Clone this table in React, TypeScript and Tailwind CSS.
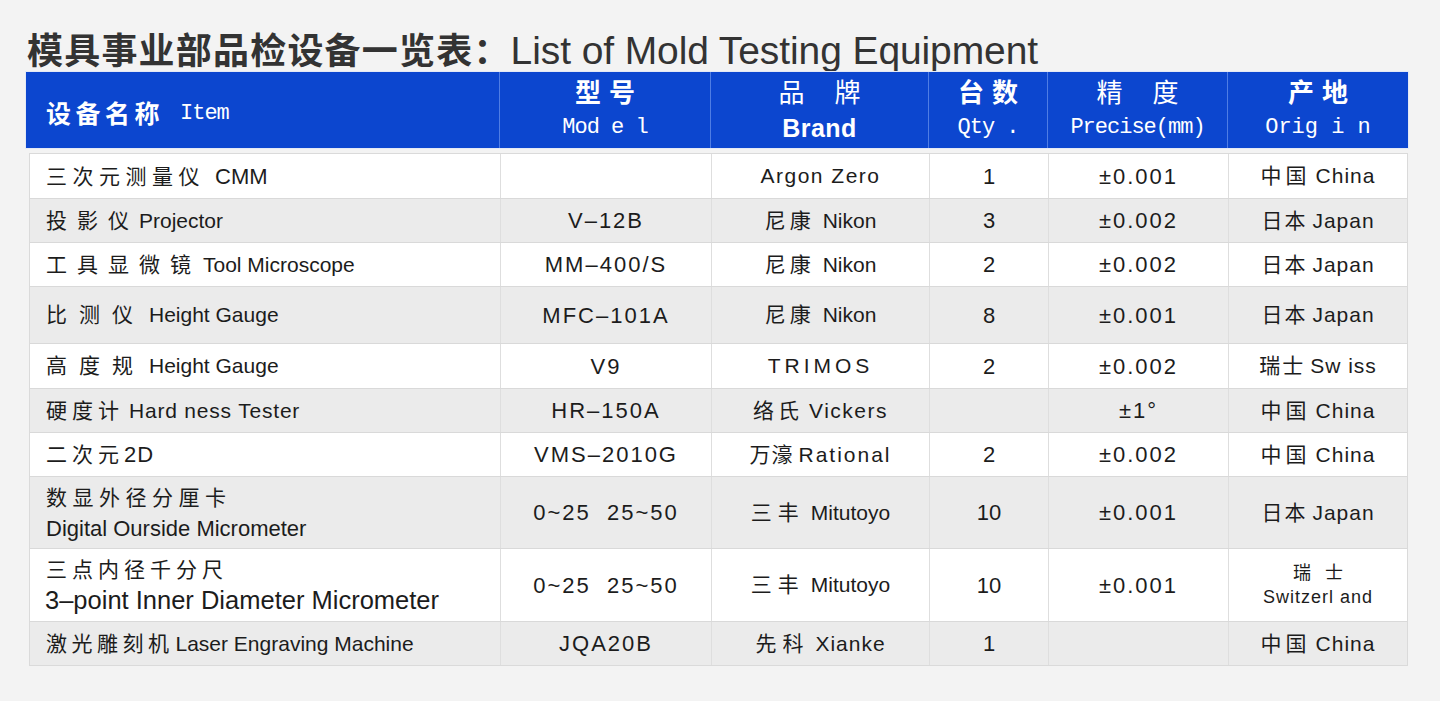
import React from "react";

type Row = {
  h: string;
  bg: string;
  item: React.ReactNode;
  model: React.ReactNode;
  brand: React.ReactNode;
  qty: string;
  precise: string;
  origin: React.ReactNode;
};

const rows: Row[] = [
  {
    h: "h-[44px]",
    bg: "bg-white",
    item: (
      <span>
        <span className="tracking-[5.5px] text-[21px]">三次元测量仪</span>
        <span className="ml-[10px] text-[22px]">CMM</span>
      </span>
    ),
    model: "",
    brand: <span className="tracking-[1.5px]">Argon Zero</span>,
    qty: "1",
    precise: "±0.001",
    origin: (
      <span>
        <span className="tracking-[4px]">中国</span>
        <span className="ml-[5px] tracking-[1px]">China</span>
      </span>
    ),
  },
  {
    h: "h-[44px]",
    bg: "bg-[#ebebeb]",
    item: (
      <span>
        <span className="tracking-[10px] text-[21px]">投影仪</span>
        <span className="ml-[0px]">Projector</span>
      </span>
    ),
    model: "V–12B",
    brand: (
      <span>
        <span className="tracking-[4px]">尼康</span>
        <span className="ml-[8px]">Nikon</span>
      </span>
    ),
    qty: "3",
    precise: "±0.002",
    origin: (
      <span>
        <span className="tracking-[2px]">日本</span>
        <span className="ml-[5px] tracking-[1px]">Japan</span>
      </span>
    ),
  },
  {
    h: "h-[44px]",
    bg: "bg-white",
    item: (
      <span>
        <span className="tracking-[10px] text-[21px]">工具显微镜</span>
        <span className="ml-[2px]">Tool Microscope</span>
      </span>
    ),
    model: "MM–400/S",
    brand: (
      <span>
        <span className="tracking-[4px]">尼康</span>
        <span className="ml-[8px]">Nikon</span>
      </span>
    ),
    qty: "2",
    precise: "±0.002",
    origin: (
      <span>
        <span className="tracking-[2px]">日本</span>
        <span className="ml-[5px] tracking-[1px]">Japan</span>
      </span>
    ),
  },
  {
    h: "h-[57px]",
    bg: "bg-[#ebebeb]",
    item: (
      <span>
        <span className="tracking-[12px] text-[21px]">比测仪</span>
        <span className="ml-[4px]">Height Gauge</span>
      </span>
    ),
    model: "MFC–101A",
    brand: (
      <span>
        <span className="tracking-[4px]">尼康</span>
        <span className="ml-[8px]">Nikon</span>
      </span>
    ),
    qty: "8",
    precise: "±0.001",
    origin: (
      <span>
        <span className="tracking-[2px]">日本</span>
        <span className="ml-[5px] tracking-[1px]">Japan</span>
      </span>
    ),
  },
  {
    h: "h-[45px]",
    bg: "bg-white",
    item: (
      <span>
        <span className="tracking-[12px] text-[21px]">高度规</span>
        <span className="ml-[4px]">Height Gauge</span>
      </span>
    ),
    model: "V9",
    brand: <span className="tracking-[4px]">TRIMOS</span>,
    qty: "2",
    precise: "±0.002",
    origin: (
      <span>
        <span className="tracking-[2px]">瑞士</span>
        <span className="ml-[5px] tracking-[1px]">Sw iss</span>
      </span>
    ),
  },
  {
    h: "h-[44px]",
    bg: "bg-[#ebebeb]",
    item: (
      <span>
        <span className="tracking-[5px] text-[21px]">硬度计</span>
        <span className="ml-[5px] tracking-[0.8px]">Hard ness Tester</span>
      </span>
    ),
    model: "HR–150A",
    brand: (
      <span>
        <span className="tracking-[4px]">络氏</span>
        <span className="ml-[6px] tracking-[1.5px]">Vickers</span>
      </span>
    ),
    qty: "",
    precise: "±1°",
    origin: (
      <span>
        <span className="tracking-[4px]">中国</span>
        <span className="ml-[5px] tracking-[1px]">China</span>
      </span>
    ),
  },
  {
    h: "h-[44px]",
    bg: "bg-white",
    item: (
      <span>
        <span className="tracking-[5px] text-[21px]">二次元</span>
        <span className="text-[22px] tracking-[1px]">2D</span>
      </span>
    ),
    model: "VMS–2010G",
    brand: (
      <span>
        <span className="tracking-[1px]">万濠</span>
        <span className="ml-[5px] tracking-[2px]">Rational</span>
      </span>
    ),
    qty: "2",
    precise: "±0.002",
    origin: (
      <span>
        <span className="tracking-[4px]">中国</span>
        <span className="ml-[5px] tracking-[1px]">China</span>
      </span>
    ),
  },
  {
    h: "h-[72px]",
    bg: "bg-[#ebebeb]",
    item: (
      <span className="flex flex-col leading-[31px]">
        <span className="tracking-[5.5px] text-[21px]">数显外径分厘卡</span>
        <span className="text-[22px]">Digital Ourside Micrometer</span>
      </span>
    ),
    model: "0~25  25~50",
    brand: (
      <span>
        <span className="tracking-[6px]">三丰</span>
        <span className="ml-[6px]">Mitutoyo</span>
      </span>
    ),
    qty: "10",
    precise: "±0.001",
    origin: (
      <span>
        <span className="tracking-[2px]">日本</span>
        <span className="ml-[5px] tracking-[1px]">Japan</span>
      </span>
    ),
  },
  {
    h: "h-[73px]",
    bg: "bg-white",
    item: (
      <span className="flex flex-col leading-[31px]">
        <span className="tracking-[5px] text-[21px]">三点内径千分尺</span>
        <span className="text-[25.5px] -ml-[1px] tracking-[0px]">3–point Inner Diameter Micrometer</span>
      </span>
    ),
    model: "0~25  25~50",
    brand: (
      <span>
        <span className="tracking-[6px]">三丰</span>
        <span className="ml-[6px]">Mitutoyo</span>
      </span>
    ),
    qty: "10",
    precise: "±0.001",
    origin: (
      <span className="flex flex-col items-center leading-[24px] text-[18px]">
        <span className="tracking-[14px] pl-[14px]">瑞士</span>
        <span className="tracking-[1px]">Switzerl and</span>
      </span>
    ),
  },
  {
    h: "h-[44px]",
    bg: "bg-[#ebebeb]",
    item: (
      <span>
        <span className="tracking-[4.5px] text-[21px]">激光雕刻机</span>
        <span className="ml-[2px]">Laser Engraving Machine</span>
      </span>
    ),
    model: "JQA20B",
    brand: (
      <span>
        <span className="tracking-[6px]">先科</span>
        <span className="ml-[6px] tracking-[1px]">Xianke</span>
      </span>
    ),
    qty: "1",
    precise: "",
    origin: (
      <span>
        <span className="tracking-[4px]">中国</span>
        <span className="ml-[5px] tracking-[1px]">China</span>
      </span>
    ),
  },
];

const HeadCell = ({
  top,
  bottom,
  topBold,
  bottomClass,
  last,
}: {
  top: [string, string];
  bottom: string;
  topBold: boolean;
  bottomClass: string;
  last?: boolean;
}) => (
  <div
    className={`flex flex-col items-center justify-center ${last ? "" : "border-r border-[#4f7de4]"}`}
  >
    <div
      className={`flex items-center justify-center h-[34px] text-[26px] leading-[34px] -mt-[2px] font-['Noto_Sans_CJK_SC',sans-serif] ${topBold ? "font-bold" : "font-normal"}`}
    >
      <span>{top[0]}</span>
      <span className={topBold ? "ml-[8px]" : "ml-[30px]"}>{top[1]}</span>
    </div>
    <div className={`h-[34px] leading-[34px] mt-[3px] ${bottomClass}`}>{bottom}</div>
  </div>
);

export default function App() {
  const mono = "font-['Liberation_Mono',monospace] text-[22px] tracking-[-1px]";
  return (
    <div className="min-h-[701px] w-[1440px] bg-[#f3f3f3] text-[#1c1c1c]">
      <div className="h-[72px] pt-[26px] pl-[27px] leading-[44px] text-[#333333] whitespace-nowrap">
        <span className="font-['Noto_Sans_CJK_SC',sans-serif] font-bold text-[36px] tracking-[1.2px]">
          模具事业部品检设备一览表：
        </span>
        <span className="font-['Liberation_Sans',sans-serif] text-[39px] tracking-[-0.1px]">
          List of Mold Testing Equipment
        </span>
      </div>

      <div className="ml-[26px] w-[1382px]">
        <div className="grid grid-cols-[474px_211px_218px_119px_180px_180px] h-[76px] bg-[#0c46cf] text-white outline outline-1 outline-[#e4e9f5]">
          <div className="flex items-center pl-[20px] pt-[6px] border-r border-[#4f7de4]">
            <span className="font-['Noto_Sans_CJK_SC',sans-serif] font-bold text-[25px] tracking-[4.5px]">
              设备名称
            </span>
            <span className={`${mono} ml-[16px]`}>Item</span>
          </div>
          <HeadCell top={["型", "号"]} bottom="Mod e l" topBold bottomClass={mono} />
          <HeadCell
            top={["品", "牌"]}
            bottom="Brand"
            topBold={false}
            bottomClass="font-['Liberation_Sans',sans-serif] font-bold text-[25px] tracking-[0.5px]"
          />
          <HeadCell top={["台", "数"]} bottom="Qty ." topBold bottomClass={mono} />
          <HeadCell
            top={["精", "度"]}
            bottom="Precise(mm)"
            topBold={false}
            bottomClass={mono}
          />
          <HeadCell
            top={["产", "地"]}
            bottom="Orig i n"
            topBold
            bottomClass={`${mono} tracking-[0px]`}
            last
          />
        </div>

        <div className="mt-[5px] ml-[3px] w-[1379px] border border-[#dadada] font-['Liberation_Sans','Noto_Sans_CJK_SC',sans-serif] text-[21px]">
          {rows.map((r, i) => (
            <div
              key={i}
              className={`grid grid-cols-[471px_211px_218px_119px_180px_178px] ${r.h} ${r.bg} ${i > 0 ? "border-t border-[#d9d9d9]" : ""}`}
            >
              <div className="flex items-center pl-[16px] border-r border-[#dedede] whitespace-nowrap">
                {r.item}
              </div>
              <div className="flex items-center justify-center border-r border-[#dedede] text-[22px] tracking-[2px] whitespace-pre">
                {r.model}
              </div>
              <div className="flex items-center justify-center border-r border-[#dedede] whitespace-nowrap">
                {r.brand}
              </div>
              <div className="flex items-center justify-center border-r border-[#dedede] text-[22px]">
                {r.qty}
              </div>
              <div className="flex items-center justify-center border-r border-[#dedede] text-[22px] tracking-[2px]">
                {r.precise}
              </div>
              <div className="flex items-center justify-center whitespace-nowrap">{r.origin}</div>
            </div>
          ))}
        </div>
      </div>
    </div>
  );
}
